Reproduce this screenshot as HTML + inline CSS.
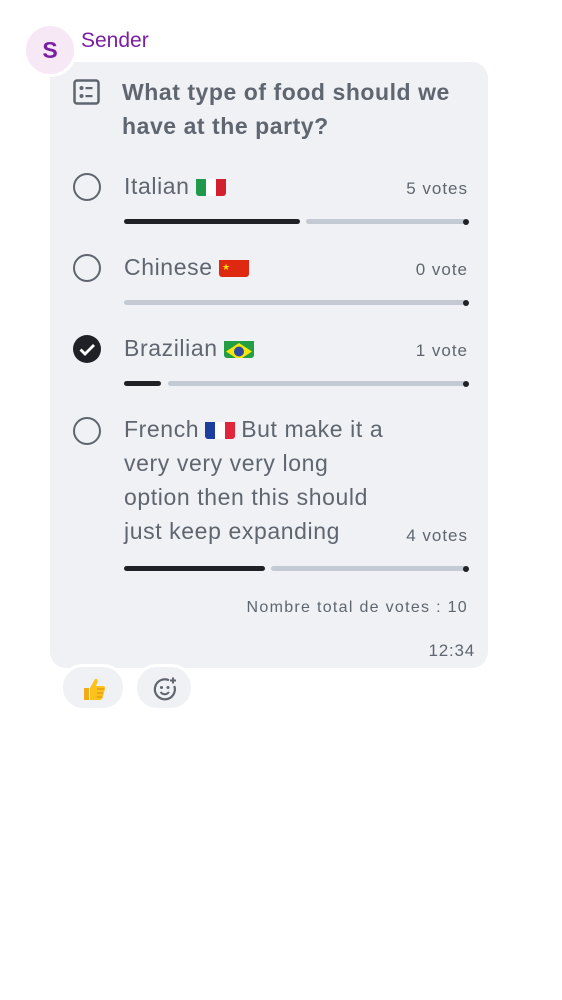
<!DOCTYPE html>
<html><head><meta charset="utf-8"><style>
*{margin:0;padding:0;box-sizing:border-box}
body{width:562px;height:1000px;background:#fff;position:relative;font-family:"Liberation Sans","DejaVu Sans",sans-serif;color:#5f6670;overflow:hidden}
.a{position:absolute;white-space:nowrap}
.bub{position:absolute;left:50px;top:62px;width:438px;height:606px;background:#eff1f5;border-radius:16px}
.av{position:absolute;left:23px;top:23px;width:54px;height:54px;border-radius:50%;background:#f7e8f6;border:3px solid #fff;color:#7b1fa2;font-size:23px;font-weight:bold;text-align:center;line-height:48px}
.opt{font-size:23px;line-height:34px;letter-spacing:.6px}
.v{font-size:17px;text-align:right;right:94px;letter-spacing:1px}
.bar{position:absolute;height:5px;border-radius:3px}
.d{background:#1f2126}.l{background:#c3cad3}
.dot{position:absolute;width:6px;height:6px;border-radius:50%;background:#1f2126}
.r{position:absolute;left:73px;width:28px;height:28px;border-radius:50%;border:2.5px solid #5f6670}
.flag{display:inline-block;vertical-align:-2px;width:30px;height:21px;border-radius:3px;overflow:hidden;margin-left:6px}
.pill{position:absolute;top:664px;height:47px;border-radius:23px;background:#eff1f5;border:3px solid #fff}
</style></head><body>
<div class="bub"></div>
<div class="av">S</div>
<div class="a" style="left:81px;top:29px;font-size:21px;color:#7b1fa2">Sender</div>
<svg class="a" style="left:72px;top:78px" width="30" height="30" viewBox="0 0 30 30"><rect x="2.5" y="2.5" width="24" height="23" rx="2.5" fill="none" stroke="#5f6670" stroke-width="2.5"/><circle cx="9.5" cy="10" r="2" fill="#5f6670"/><circle cx="9.5" cy="18" r="2" fill="#5f6670"/><rect x="13.5" y="9" width="7" height="2.2" fill="#5f6670"/><rect x="13.5" y="17" width="7" height="2.2" fill="#5f6670"/></svg>
<div class="a" style="left:122px;top:75px;font-size:23px;line-height:34px;font-weight:bold;color:#5f6670;letter-spacing:.55px">What type of food should we<br>have at the party?</div>

<div class="r" style="top:173px"></div>
<div class="a opt" style="left:124px;top:169px">Italian<span class="flag"><svg width="30" height="21"><rect width="10" height="21" fill="#1e9a4a"/><rect x="10" width="10" height="21" fill="#fff"/><rect x="20" width="10" height="21" fill="#d2202f"/></svg></span></div>
<div class="a v" style="top:179px">5 votes</div>
<div class="bar d" style="left:124px;top:219px;width:176px"></div>
<div class="bar l" style="left:306px;top:219px;width:160px"></div>
<div class="dot" style="left:463px;top:219px"></div>

<div class="r" style="top:254px"></div>
<div class="a opt" style="left:124px;top:250px">Chinese<span class="flag"><svg width="30" height="21"><rect width="30" height="21" fill="#de2910"/><text x="3" y="10" font-size="9" fill="#ffde00">★</text></svg></span></div>
<div class="a v" style="top:260px">0 vote</div>
<div class="bar l" style="left:124px;top:300px;width:342px"></div>
<div class="dot" style="left:463px;top:300px"></div>

<svg class="a" style="left:72px;top:334px" width="30" height="30"><circle cx="15" cy="15" r="14" fill="#1f2126"/><path d="M8.5 15.5l4.5 4.5 9-9" fill="none" stroke="#fff" stroke-width="2.8"/></svg>
<div class="a opt" style="left:124px;top:331px">Brazilian<span class="flag"><svg width="30" height="21"><rect width="30" height="21" fill="#229e45"/><polygon points="15,2 28,10.5 15,19 2,10.5" fill="#f8e509"/><circle cx="15" cy="10.5" r="5" fill="#2b49a3"/></svg></span></div>
<div class="a v" style="top:341px">1 vote</div>
<div class="bar d" style="left:124px;top:381px;width:37px"></div>
<div class="bar l" style="left:168px;top:381px;width:298px"></div>
<div class="dot" style="left:463px;top:381px"></div>

<div class="r" style="top:417px"></div>
<div class="a opt" style="left:124px;top:412px">French<span class="flag" style="margin-right:6px"><svg width="30" height="21"><rect width="10" height="21" fill="#1f3f9e"/><rect x="10" width="10" height="21" fill="#fff"/><rect x="20" width="10" height="21" fill="#e1253a"/></svg></span>But make it a<br>very very very long<br>option then this should<br>just keep expanding</div>
<div class="a v" style="top:526px">4 votes</div>
<div class="bar d" style="left:124px;top:566px;width:141px"></div>
<div class="bar l" style="left:271px;top:566px;width:195px"></div>
<div class="dot" style="left:463px;top:566px"></div>

<div class="a" style="right:94px;top:599px;font-size:16px;letter-spacing:1.3px">Nombre total de votes : 10</div>
<div class="a" style="right:87px;top:641px;font-size:17px;letter-spacing:.8px">12:34</div>

<div class="pill" style="left:60px;width:66px"><svg class="a" style="left:17px;top:8px" width="28" height="28" viewBox="0 0 28 28"><path d="M4 13h5v12H4z" fill="#f2a91a"/><path d="M10 13l5-9c2-1 3 1 2.5 3L16 11h7c1.5 0 2.5 1.5 2 3l-2.5 9c-.5 1.2-1.3 2-3 2H10z" fill="#fcc21b"/><path d="M17 14h7M17 18h6M17 22h5" stroke="#e39c1a" stroke-width="1.5"/></svg></div>
<div class="pill" style="left:134px;width:60px"><svg class="a" style="left:15px;top:9px" width="26" height="26" viewBox="0 0 26 26"><path d="M17 4.2A10 10 0 1 0 22.3 10" fill="none" stroke="#5f6670" stroke-width="2.2"/><circle cx="9.5" cy="11.5" r="1.5" fill="#5f6670"/><circle cx="16" cy="11.5" r="1.5" fill="#5f6670"/><path d="M8.5 16c2.5 3 6 3 8.5 0" fill="none" stroke="#5f6670" stroke-width="2"/><path d="M21 1.5v6M18 4.5h6" stroke="#5f6670" stroke-width="2"/></svg></div>
</body></html>
